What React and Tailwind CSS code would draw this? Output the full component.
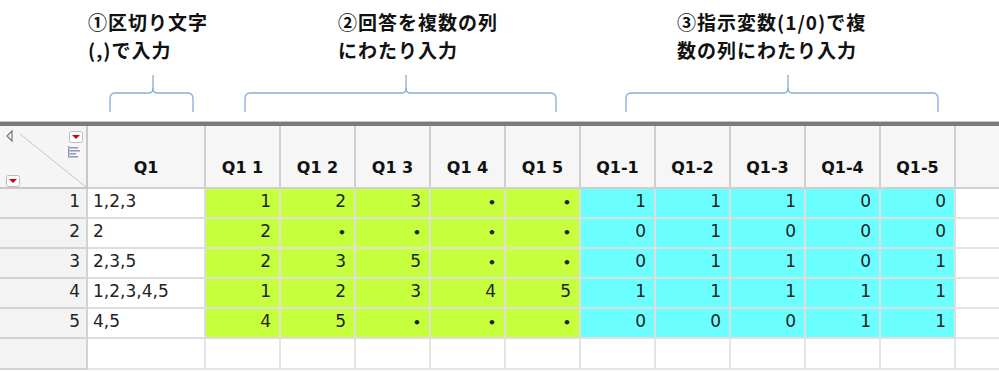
import React from 'react'

const q1 = ["1,2,3", "2", "2,3,5", "1,2,3,4,5", "4,5"]
const split = [
  [1, 2, 3, null, null],
  [2, null, null, null, null],
  [2, 3, 5, null, null],
  [1, 2, 3, 4, 5],
  [4, 5, null, null, null],
]
const flags = [
  [1, 1, 1, 0, 0],
  [0, 1, 0, 0, 0],
  [0, 1, 1, 0, 1],
  [1, 1, 1, 1, 1],
  [0, 0, 0, 1, 1],
]
const splitCols = ["Q1 1", "Q1 2", "Q1 3", "Q1 4", "Q1 5"]
const flagCols = ["Q1-1", "Q1-2", "Q1-3", "Q1-4", "Q1-5"]

function Brace({ x1, x2, mid }) {
  return (
    <>
      <path d={`M${x1} 42 V29 Q${x1} 23 ${x1 + 5} 23 H${mid - 4} Q${mid} 23 ${mid} 18 V5`} />
      <path d={`M${x2} 42 V29 Q${x2} 23 ${x2 - 5} 23 H${mid + 4} Q${mid} 23 ${mid} 18`} />
    </>
  )
}

function NumCell({ value, bg }) {
  return (
    <div className={`h-[30px] border-r-2 border-b-2 border-[#dedede] ${bg} flex items-center justify-end pr-[8px] pb-[3px] text-[17px] text-[#222]`}>
      {value === null ? <span className="text-[13px] font-bold leading-none pt-[2px]">•</span> : value}
    </div>
  )
}

function CornerCell() {
  return (
    <div className="relative h-[63px] border-r-2 border-b-2 border-[#c8c8c8] bg-[#f5f5f5]">
      {/* corner controls */}
      <svg className="absolute left-0 top-0" width="86" height="61" viewBox="0 0 86 61">
        <line x1="20" y1="8" x2="86" y2="61" stroke="#c4c4c4" strokeWidth="1" />
        <path d="M12 5 L7 10 L12 15 Z" fill="none" stroke="#777" strokeWidth="1.2" />
        <rect x="69.5" y="5.5" width="13" height="11" rx="2" fill="#fff" stroke="#bbb" />
        <path d="M72 9 H80 L76 13 Z" fill="#d00" />
        <g fill="#8a9cb0">
          <rect x="68" y="20" width="1.5" height="12" />
          <rect x="70" y="21" width="8" height="1.5" />
          <rect x="70" y="24" width="10" height="1.5" />
          <rect x="70" y="27" width="6" height="1.5" />
          <rect x="70" y="30" width="8" height="1.5" />
        </g>
        <rect x="6.5" y="49.5" width="13" height="11" rx="2" fill="#fff" stroke="#bbb" />
        <path d="M9 53 H17 L13 57 Z" fill="#d00" />
      </svg>
    </div>
  )
}

function HeadCell({ label }) {
  return (
    <div className="h-[63px] border-r-2 border-b-2 border-[#cfcfcf] bg-[#f6f6f6] flex items-end justify-center pb-[7px] text-[16px] font-bold text-[#111]">
      {label}
    </div>
  )
}

export default function App() {
  return (
    <div className="w-[999px] h-[372px] overflow-hidden bg-white" style={{ fontFamily: '"DejaVu Sans", Verdana, sans-serif' }}>
      {/* annotations */}
      <div className="h-[121px] flex flex-col">
        <div
          className="h-[70px] flex pt-[8px] text-[19px] font-bold leading-[28px] tracking-[1px] text-[#111]"
          style={{ fontFamily: '"Noto Sans CJK JP", "Noto Sans", sans-serif' }}
        >
          <div className="w-[250px] ml-[88px]">
            <div>①区切り文字</div>
            <div>(,)で入力</div>
          </div>
          <div className="w-[339px]">
            <div>②回答を複数の列</div>
            <div>にわたり入力</div>
          </div>
          <div>
            <div>③指示変数(1/0)で複</div>
            <div>数の列にわたり入力</div>
          </div>
        </div>
        <svg width="999" height="51" viewBox="0 0 999 51" fill="none" stroke="#8eaadb" strokeWidth="1.3">
          <Brace x1={110} x2={193} mid={153} />
          <Brace x1={245} x2={556} mid={406} />
          <Brace x1={626} x2={938} mid={788} />
        </svg>
      </div>
      <div className="h-[1px] bg-[#c0c8d8]" />
      <div className="h-[4px] bg-[#7b7b7b]" />

      {/* data table */}
      <div className="grid grid-cols-[88px_118px_repeat(10,75px)_1fr]">
        <CornerCell />
        <HeadCell label="Q1" />
        {splitCols.map((c) => <HeadCell key={c} label={c} />)}
        {flagCols.map((c) => <HeadCell key={c} label={c} />)}
        <div className="h-[63px] border-b-2 border-[#cfcfcf] bg-[#f6f6f6]" />

        {q1.map((v, i) => (
          <React.Fragment key={i}>
            <div className="h-[30px] border-r-2 border-b-2 border-[#d2d2d2] bg-[#f3f3f3] flex items-center justify-end pr-[6px] pb-[3px] text-[17px] text-[#222]">
              {i + 1}
            </div>
            <div className="h-[30px] border-r-2 border-b-2 border-[#dedede] bg-white flex items-center pl-[5px] pb-[3px] text-[17px] text-[#222]">
              {v}
            </div>
            {split[i].map((n, j) => <NumCell key={`s${j}`} value={n} bg="bg-[#c6ff3c]" />)}
            {flags[i].map((n, j) => <NumCell key={`f${j}`} value={n} bg="bg-[#6cffff]" />)}
            <div className="h-[30px] border-b-2 border-[#e4e4e4] bg-white" />
          </React.Fragment>
        ))}

        <div className="h-[31px] border-r-2 border-b-2 border-[#d2d2d2] bg-[#f3f3f3]" />
        {Array.from({ length: 11 }).map((_, j) => (
          <div key={j} className="h-[31px] border-r-2 border-b-2 border-[#e4e4e4] bg-white" />
        ))}
        <div className="h-[31px] border-b-2 border-[#e4e4e4] bg-white" />
      </div>
    </div>
  )
}
